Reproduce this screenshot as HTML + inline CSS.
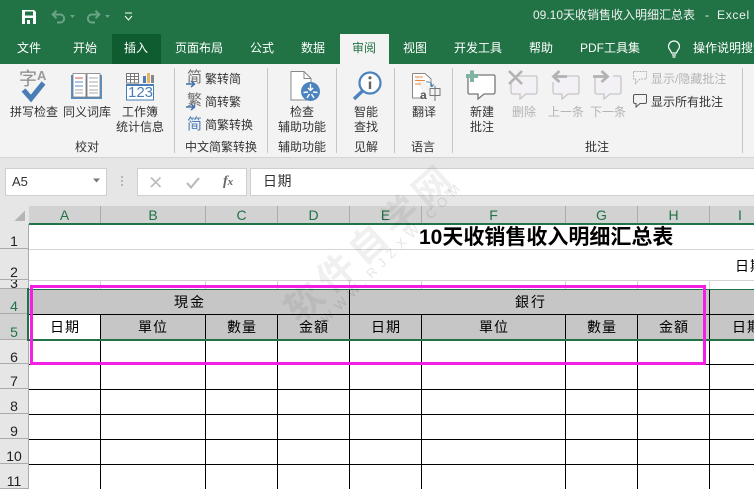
<!DOCTYPE html>
<html><head><meta charset="utf-8">
<style>
html,body{margin:0;padding:0;width:754px;height:489px;overflow:hidden;background:#fff}
body{position:relative;font-family:"Liberation Sans","Noto Sans CJK SC",sans-serif;font-size:12px;color:#333}
.a{position:absolute}
.t{position:absolute;white-space:nowrap;line-height:16px}
.c{transform:translateX(-50%)}
.tab{position:absolute;top:34px;height:30px;line-height:29px;color:#fff;font-size:12px;white-space:nowrap;text-align:center}
.sep{position:absolute;top:68px;width:1px;height:85px;background:#c6c6c6}
.ch{position:absolute;top:206px;height:17px;background:#d2d2d2;border-right:1px solid #ababab;box-sizing:border-box;text-align:center;color:#217346;font-size:14px;line-height:19px;overflow:hidden}
.rh{position:absolute;left:0;width:28px;background:#e6e6e6;border-bottom:1px solid #ababab;box-sizing:border-box;text-align:center;color:#222;font-size:14px}
.v{position:absolute;width:1px}
.h{position:absolute;height:1px}
.cell{position:absolute;white-space:nowrap;color:#000;font-size:14px;line-height:20px;transform:translateX(-50%);letter-spacing:1px}
svg{position:absolute;overflow:visible}
</style></head><body>

<!-- title bar -->
<div class="a" style="left:0;top:0;width:754px;height:64px;background:#217346"></div>
<svg style="left:22px;top:10px" width="15" height="15" viewBox="0 0 15 15"><path d="M0 0H12L14 2V14H0Z" fill="#fff"/><rect x="3" y="1.500" width="8" height="4" fill="#217346"/><rect x="3" y="8" width="8" height="6" fill="#217346"/><rect x="5" y="10" width="3" height="4" fill="#fff"/></svg>
<svg style="left:51px;top:10px" width="15" height="14" viewBox="0 0 15 14" fill="none" stroke="#6ba386" stroke-width="2"><path d="M2 4.500H9C14.500 4.500 14.500 12.500 9 12.500H6M5.500 .7L1.700 4.500L5.500 8.300"/></svg>
<svg style="left:70px;top:15px" width="6" height="4" viewBox="0 0 6 4"><path d="M0 0H5L2.500 3Z" fill="#6ba386"/></svg>
<svg style="left:86px;top:10px" width="15" height="14" viewBox="0 0 15 14" fill="none" stroke="#6ba386" stroke-width="2"><path d="M13 4.500H6C.5 4.500 .5 12.500 6 12.500H9M9.500 .7L13.300 4.500L9.500 8.300"/></svg>
<svg style="left:105px;top:15px" width="6" height="4" viewBox="0 0 6 4"><path d="M0 0H5L2.500 3Z" fill="#6ba386"/></svg>
<svg style="left:124px;top:12px" width="10" height="10" viewBox="0 0 10 10" fill="none" stroke="#fff" stroke-width="1"><path d="M1 1H8"/><path d="M1 4L4.500 8L8 4"/></svg>
<div class="t" style="left:533px;top:7px;color:#f0f0f0;font-size:12px">09.10天收销售收入明细汇总表<span style="position:absolute;left:172px">-</span><span style="position:absolute;left:184px;letter-spacing:.7px">Excel</span></div>

<!-- tabs -->
<div class="tab" style="left:17px">文件</div>
<div class="tab" style="left:73px">开始</div>
<div class="a" style="left:112px;top:34px;width:49px;height:30px;background:#0f5c30"></div>
<div class="tab" style="left:124px">插入</div>
<div class="tab" style="left:175px">页面布局</div>
<div class="tab" style="left:250px">公式</div>
<div class="tab" style="left:301px">数据</div>
<div class="a" style="left:340px;top:34px;width:49px;height:30px;background:#f3f3f3"></div>
<div class="tab" style="left:352px;color:#217346">审阅</div>
<div class="tab" style="left:403px">视图</div>
<div class="tab" style="left:454px">开发工具</div>
<div class="tab" style="left:529px">帮助</div>
<div class="tab" style="left:580px">PDF工具集</div>
<svg style="left:667px;top:41px" width="14" height="18" viewBox="0 0 14 18" fill="none" stroke="#fff" stroke-width="1.200"><path d="M4.500 12C4 9 1.500 8.500 1.500 5.500A5.500 5.500 0 0 1 12.500 5.500C12.500 8.500 10 9 9.500 12ZM5 14H9M5.500 16H8.500"/></svg>
<div class="tab" style="left:693px">操作说明搜索</div>

<!-- ribbon -->
<div class="a" style="left:0;top:64px;width:754px;height:93px;background:#f3f3f3"></div>
<div class="a" style="left:0;top:157px;width:754px;height:49px;background:#e6e6e6"></div>
<div class="a" style="left:0;top:157px;width:754px;height:1px;background:#d4d4d4"></div>
<div class="sep" style="left:174px"></div>
<div class="sep" style="left:267px"></div>
<div class="sep" style="left:336px"></div>
<div class="sep" style="left:394px"></div>
<div class="sep" style="left:452px"></div>
<div class="sep" style="left:742px"></div>

<!-- 校对 icons -->
<div class="t" style="left:19px;top:68px;font-size:18px;line-height:22px;color:#8a8a8a">字</div>
<div class="t" style="left:37px;top:68px;font-size:13px;line-height:16px;font-weight:bold;color:#9a9a9a">A</div>
<svg style="left:20px;top:80px" width="26" height="24" viewBox="0 0 26 24" fill="none" stroke="#4a7db5" stroke-width="5"><path d="M3.500 10L11 18.500L23.500 3"/></svg>
<svg style="left:70px;top:72px" width="33" height="28" viewBox="0 0 33 28"><rect x="1" y="3" width="31" height="24" fill="#5b8fc4"/><path d="M3 1.500H16V25H3ZM17 1.500H30V25H17Z" fill="#fff" stroke="#777" stroke-width=".8"/><path d="M5 6H13" stroke="#d9534f"/><path d="M5 10H13M5 14H13" stroke="#5b8fc4"/><path d="M5 18H13M5 21H13M19 6H28M19 10H28M19 14H28M19 18H28M19 21H28" stroke="#aaa"/></svg>
<svg style="left:126px;top:73px" width="29" height="28" viewBox="0 0 29 28"><path d="M.5.500H12.500V10H.5ZM.5 3.500H12.500M.5 6.500H12.500M4.500.500V10M8.500.500V10" fill="#fff" stroke="#777"/><rect x="17" y="3" width="3" height="7" fill="#4a7db5"/><rect x="21" y="0" width="3" height="10" fill="#e3b566"/><rect x="25" y="2" width="3" height="8" fill="#888"/><rect x=".5" y="11.500" width="27" height="15.500" fill="#fff" stroke="#4a7db5"/><rect x="0" y="11" width="28" height="2" fill="#4a7db5"/></svg>
<div class="t" style="left:128px;top:85px;font-size:15px;color:#4a7db5;letter-spacing:0">123</div>
<div class="t c" style="left:34px;top:104px">拼写检查</div>
<div class="t c" style="left:87px;top:104px">同义词库</div>
<div class="t c" style="left:140px;top:104px">工作簿</div>
<div class="t c" style="left:140px;top:119px">统计信息</div>
<div class="t c" style="left:87px;top:139px">校对</div>

<!-- 简繁 -->
<div class="t" style="left:187px;top:69px;font-size:15px;line-height:18px;color:#6e6e6e">简</div>
<div class="t" style="left:187px;top:92px;font-size:15px;line-height:18px;color:#6e6e6e">繁</div>
<div class="t" style="left:187px;top:116px;font-size:15px;line-height:18px;color:#4a7db5">简</div>
<svg style="left:185px;top:76px" width="14" height="50" viewBox="0 0 14 50" fill="none" stroke="#3f74ae" stroke-width="1.500"><path d="M1 8H9M6 5L9.500 8L6 11"/><path d="M1 31H9M6 28L9.500 31L6 34"/></svg>
<div class="t" style="left:205px;top:71px">繁转简</div>
<div class="t" style="left:205px;top:94px">简转繁</div>
<div class="t" style="left:205px;top:117px">简繁转换</div>
<div class="t c" style="left:221px;top:139px">中文简繁转换</div>

<!-- 辅助功能 -->
<svg style="left:290px;top:71px" width="30" height="30" viewBox="0 0 30 30"><path d="M1 .5H14L21 7.500V29H1Z" fill="#fff" stroke="#888"/><path d="M14 .5V7.500H21" fill="none" stroke="#888"/><circle cx="20.500" cy="20.500" r="9.500" fill="#4a83bd"/><path d="M20.500 13V19M18 17L20.500 19.500L23 17M13.500 21.500L18 21M23 21L27.500 21.500M17 27L19.500 23M24 27L21.500 23" stroke="#fff" stroke-width="1.400" fill="none"/></svg>
<div class="t c" style="left:302px;top:104px">检查</div>
<div class="t c" style="left:302px;top:119px">辅助功能</div>
<div class="t c" style="left:302px;top:139px">辅助功能</div>

<!-- 见解 -->
<svg style="left:352px;top:71px" width="30" height="30" viewBox="0 0 30 30" fill="none"><circle cx="18" cy="12" r="10.500" stroke="#4a83bd" stroke-width="2.200" fill="#fff"/><path d="M11 19.500L2 28" stroke="#4a83bd" stroke-width="3.400"/><path d="M18 10.500V18" stroke="#666" stroke-width="2.400"/><circle cx="18" cy="6.800" r="1.600" fill="#666"/></svg>
<div class="t c" style="left:366px;top:104px">智能</div>
<div class="t c" style="left:366px;top:119px">查找</div>
<div class="t c" style="left:366px;top:139px">见解</div>

<!-- 语言 -->
<svg style="left:412px;top:73px" width="30" height="28" viewBox="0 0 30 28" fill="none"><path d="M.5.500H13L19 6V14M.5.500V25H14" stroke="#888" fill="#fff"/><path d="M3 4H11M3 7.500H13M3 11H9" stroke="#e8883a"/><path d="M14 9C18 8.500 20 10 20 13M18 11.500L20 13.500L22 11.500" stroke="#4a83bd"/><path d="M18 15.500H28V22.500H18ZM23 13V28" stroke="#777"/></svg>
<div class="t" style="left:420px;top:87px;font-size:12px;color:#555;font-weight:bold">a</div>
<div class="t c" style="left:424px;top:104px">翻译</div>
<div class="t c" style="left:423px;top:139px">语言</div>

<!-- 批注 -->
<svg style="left:466px;top:70px" width="30" height="30" viewBox="0 0 30 30" fill="none"><path d="M4 5H28Q29 5 29 7V22Q29 24 27 24H18L12 29V24H3Q2 24 2 22V8" stroke="#777" stroke-width="1.300" fill="#fff"/><path d="M4 0.500H8V4H12V8H8V12H4V8H0V4H4Z" fill="#7fb5a0"/></svg>
<svg style="left:508px;top:70px" width="30" height="30" viewBox="0 0 30 30" fill="none"><path d="M6 6H28Q29 6 29 8V22Q29 24 27 24H18L12 29V24H5Q3 24 3 22V12" stroke="#c6c6c6" stroke-width="1.300" fill="#f3f1f5"/><path d="M1 1L14 14M14 1L1 14" stroke="#b3b3b3" stroke-width="2.600"/></svg>
<svg style="left:551px;top:70px" width="30" height="30" viewBox="0 0 30 30" fill="none"><path d="M2 12V22Q2 24 4 24H11V29L17 24H26Q28 24 28 22V8Q28 6 26 6H14" stroke="#c6c6c6" stroke-width="1.300" fill="#f3f1f5"/><path d="M16 6.500H3M8.500 1L2.500 6.500L8.500 12" stroke="#b3b3b3" stroke-width="2.800"/></svg>
<svg style="left:593px;top:70px" width="30" height="30" viewBox="0 0 30 30" fill="none"><path d="M2 8V22Q2 24 4 24H11V29L17 24H26Q28 24 28 22V8Q28 6 26 6H20" stroke="#c6c6c6" stroke-width="1.300" fill="#f3f1f5"/><path d="M0 6.500H14M8.500 1L14.500 6.500L8.500 12" stroke="#b3b3b3" stroke-width="2.800"/></svg>
<div class="t c" style="left:482px;top:104px">新建</div>
<div class="t c" style="left:482px;top:119px">批注</div>
<div class="t c" style="left:524px;top:104px;color:#b4b4b4">删除</div>
<div class="t c" style="left:566px;top:104px;color:#b4b4b4">上一条</div>
<div class="t c" style="left:608px;top:104px;color:#b4b4b4">下一条</div>
<svg style="left:633px;top:71px" width="14" height="14" viewBox="0 0 14 14" fill="none" stroke="#b4b4b4" stroke-dasharray="2 1"><path d="M.5.500H13.500V8H7L2.500 12.500V8H.5Z"/></svg>
<svg style="left:633px;top:94px" width="14" height="14" viewBox="0 0 14 14" fill="none" stroke="#555"><path d="M2 .5H13Q13.500 .5 13.500 2V8Q13.500 9.500 12 9.500H7L3 13V9.500H2Q.5 9.500 .5 8V2Q.5 .5 2 .5Z"/></svg>
<div class="t" style="left:651px;top:71px;color:#b4b4b4">显示/隐藏批注</div>
<div class="t" style="left:651px;top:94px">显示所有批注</div>
<div class="t c" style="left:597px;top:139px">批注</div>

<!-- name box / formula -->
<div class="a" style="left:5px;top:168px;width:102px;height:28px;background:#fff;border:1px solid #cfcfcf;box-sizing:border-box"></div>
<div class="t" style="left:12px;top:174px;font-size:13px;color:#333">A5</div>
<svg style="left:92px;top:178px" width="10" height="6" viewBox="0 0 10 6"><path d="M1 .5H8L4.500 4.500Z" fill="#777"/></svg>
<svg style="left:121px;top:176px" width="3" height="12" viewBox="0 0 3 12"><path d="M0 0H2V2H0ZM0 4H2V6H0ZM0 8H2V10H0Z" fill="#b5b5b5"/></svg>
<div class="a" style="left:137px;top:168px;width:110px;height:28px;background:#fff;border:1px solid #cfcfcf;box-sizing:border-box"></div>
<svg style="left:150px;top:177px" width="12" height="11" viewBox="0 0 12 11" fill="none" stroke="#bcbcbc" stroke-width="1.600"><path d="M1 .5L10.500 10M10.500 .5L1 10"/></svg>
<svg style="left:186px;top:177px" width="14" height="12" viewBox="0 0 14 12" fill="none" stroke="#bcbcbc" stroke-width="2.200"><path d="M1 6L5 10.500L13 1"/></svg>
<div class="t" style="left:223px;top:174px;font-family:'Liberation Serif',serif;font-style:italic;font-weight:bold;font-size:14px;color:#666">f<span style="font-size:11px">x</span></div>
<div class="a" style="left:250px;top:168px;width:504px;height:28px;background:#fff;border:1px solid #cfcfcf;border-right:0;box-sizing:border-box"></div>
<div class="t" style="left:263px;top:172px;font-size:14px;line-height:18px;color:#333;letter-spacing:.5px">日期</div>

<!-- column headers -->
<div class="a" style="left:0;top:206px;width:29px;height:18px;background:#e6e6e6"></div>
<svg style="left:14px;top:210px" width="12" height="12" viewBox="0 0 12 12"><path d="M11 .5V11H.5Z" fill="#b5b5b5"/></svg>
<div class="ch" style="left:29px;width:72px">A</div>
<div class="ch" style="left:101px;width:105px">B</div>
<div class="ch" style="left:206px;width:72px">C</div>
<div class="ch" style="left:278px;width:72px">D</div>
<div class="ch" style="left:350px;width:72px">E</div>
<div class="ch" style="left:422px;width:144px">F</div>
<div class="ch" style="left:566px;width:72px">G</div>
<div class="ch" style="left:638px;width:72px">H</div>
<div class="ch" style="left:710px;width:44px;border-right:0;padding-left:28px;text-align:left">I</div>

<!-- grid light lines -->
<div class="h" style="left:29px;top:249px;width:725px;background:#d4d4d4"></div>
<div class="h" style="left:29px;top:280px;width:725px;background:#d4d4d4"></div>
<div class="v" style="left:100px;top:281px;height:8px;background:#d4d4d4"></div>
<div class="v" style="left:205px;top:281px;height:8px;background:#d4d4d4"></div>
<div class="v" style="left:277px;top:281px;height:8px;background:#d4d4d4"></div>
<div class="v" style="left:349px;top:281px;height:8px;background:#d4d4d4"></div>
<div class="v" style="left:421px;top:281px;height:8px;background:#d4d4d4"></div>
<div class="v" style="left:565px;top:281px;height:8px;background:#d4d4d4"></div>
<div class="v" style="left:637px;top:281px;height:8px;background:#d4d4d4"></div>
<div class="v" style="left:709px;top:281px;height:8px;background:#d4d4d4"></div>

<!-- row headers -->
<div class="a" style="left:0;top:224px;width:29px;height:265px;background:#e6e6e6"></div>
<div class="a" style="left:28px;top:224px;width:1px;height:265px;background:#ababab"></div>
<div class="rh" style="top:224px;height:25px;line-height:34px">1</div>
<div class="rh" style="top:249px;height:31px;line-height:46px">2</div>
<div class="rh" style="top:280px;height:9px;line-height:6px;overflow:hidden">3</div>
<div class="rh" style="top:289px;height:25px;line-height:34px;color:#217346;background:#d2d2d2">4</div>
<div class="rh" style="top:314px;height:26px;line-height:36px;color:#217346;background:#d2d2d2">5</div>
<div class="rh" style="top:340px;height:24px;line-height:34px">6</div>
<div class="rh" style="top:364px;height:25px;line-height:34px">7</div>
<div class="rh" style="top:389px;height:25px;line-height:34px">8</div>
<div class="rh" style="top:414px;height:25px;line-height:34px">9</div>
<div class="rh" style="top:439px;height:25px;line-height:34px">10</div>
<div class="rh" style="top:464px;height:25px;line-height:34px">11</div>

<!-- sheet fills -->
<div class="a" style="left:29px;top:290px;width:725px;height:49px;background:#c6c6c6"></div>
<div class="a" style="left:29px;top:315px;width:71px;height:24px;background:#fff"></div>

<!-- black grid -->
<div class="h" style="left:29px;top:314px;width:725px;background:#000"></div>
<div class="h" style="left:29px;top:364px;width:725px;background:#000"></div>
<div class="h" style="left:29px;top:389px;width:725px;background:#000"></div>
<div class="h" style="left:29px;top:414px;width:725px;background:#000"></div>
<div class="h" style="left:29px;top:439px;width:725px;background:#000"></div>
<div class="h" style="left:29px;top:464px;width:725px;background:#000"></div>
<div class="v" style="left:349px;top:290px;height:199px;background:#000"></div>
<div class="v" style="left:709px;top:290px;height:199px;background:#000"></div>
<div class="v" style="left:100px;top:314px;height:175px;background:#000"></div>
<div class="v" style="left:205px;top:314px;height:175px;background:#000"></div>
<div class="v" style="left:277px;top:314px;height:175px;background:#000"></div>
<div class="v" style="left:421px;top:314px;height:175px;background:#000"></div>
<div class="v" style="left:565px;top:314px;height:175px;background:#000"></div>
<div class="v" style="left:637px;top:314px;height:175px;background:#000"></div>

<!-- selection green -->
<div class="a" style="left:29px;top:223px;width:725px;height:2px;background:#217346"></div>
<div class="a" style="left:29px;top:289px;width:725px;height:1px;background:#217346"></div>
<div class="a" style="left:29px;top:339px;width:725px;height:2px;background:#217346"></div>
<div class="a" style="left:27px;top:288px;width:2px;height:53px;background:#217346"></div>

<!-- watermark -->
<div class="t" style="left:258px;top:221px;width:226px;height:44px;text-align:center;font-size:37px;line-height:44px;font-weight:bold;color:rgba(0,0,0,.06);transform:rotate(-42deg);letter-spacing:6px">软件自学网</div>
<div class="t" style="left:293px;top:244px;width:200px;height:16px;text-align:center;font-size:13px;line-height:16px;color:rgba(0,0,0,.1);transform:rotate(-45deg);letter-spacing:6px">WWW.RJZXW.COM</div>

<!-- text -->
<div class="t" style="left:419px;top:226px;font-size:21px;line-height:24px;font-weight:bold;color:#000">10天收销售收入明细汇总表</div>
<div class="cell" style="left:190px;top:292px;letter-spacing:2px">現金</div>
<div class="cell" style="left:531px;top:292px;letter-spacing:2px">銀行</div>
<div class="cell" style="left:65px;top:317px">日期</div>
<div class="cell" style="left:153px;top:317px">單位</div>
<div class="cell" style="left:242px;top:317px">數量</div>
<div class="cell" style="left:314px;top:317px">金額</div>
<div class="cell" style="left:386px;top:317px">日期</div>
<div class="cell" style="left:494px;top:317px">單位</div>
<div class="cell" style="left:602px;top:317px">數量</div>
<div class="cell" style="left:674px;top:317px">金額</div>
<div class="t" style="left:735px;top:257px;font-size:14px;line-height:18px;color:#000;letter-spacing:1px">日期</div>
<div class="t" style="left:732px;top:317px;font-size:14px;line-height:20px;color:#000;letter-spacing:1px">日期</div>

<!-- magenta box -->
<div class="a" style="left:30px;top:285px;width:676px;height:80px;border:3px solid #f21fe5;box-sizing:border-box"></div>

</body></html>
